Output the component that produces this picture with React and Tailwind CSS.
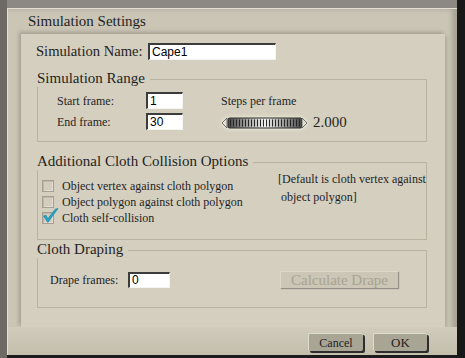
import React from "react";

function Input({ value, w, h = 17 }) {
  return (
    <div
      className="bg-white border-t-2 border-l-2 border-[#3c3c3c] border-b border-r border-b-[#f4f4f0] border-r-[#f4f4f0] flex items-center pl-[2px] font-['Liberation_Sans',sans-serif] text-[12px] text-black leading-none"
      style={{ width: w, height: h }}
    >
      {value}
    </div>
  );
}

function Heading({ children }) {
  return (
    <div className="flex h-[18px] gap-[5px]">
      <span className="text-[15px] leading-[18px] whitespace-nowrap">{children}</span>
      <div className="flex-1 mt-[10px] border-t border-r border-[#b9b49f]" />
    </div>
  );
}

function Check({ checked, label }) {
  return (
    <div className="flex items-center h-[16px] gap-[8px]">
      <div className="relative w-[12px] h-[12px] border border-[#a5a092] bg-[#d2cdbd] shadow-[inset_1px_1px_0_#bdb8a8,inset_-1px_-1px_0_#e2ddd0]">
        {checked && (
          <svg className="absolute -left-[1px] -top-[6px]" width="17" height="17" viewBox="0 0 16 16">
            <path d="M1.5 8.5 L5.5 14.5 L15 1.5 L12.5 2 L5.5 11 L3.8 7.8 Z" fill="#22a8cc" stroke="#0e7c9e" strokeWidth="0.6" />
          </svg>
        )}
      </div>
      <span className="text-[12px] leading-none whitespace-nowrap">{label}</span>
    </div>
  );
}

function Slider() {
  const ticks = Array.from({ length: 24 }, (_, i) => 9.5 + i * 3);
  return (
    <svg width="86" height="14" viewBox="0 0 86 14" className="drop-shadow-[0_0_2px_rgba(255,255,235,0.9)]">
      <defs>
        <linearGradient id="bar" x1="0" x2="1" y1="0" y2="0">
          <stop offset="0" stopColor="#4a4a4a" />
          <stop offset="0.5" stopColor="#f2f2ee" />
          <stop offset="1" stopColor="#4a4a4a" />
        </linearGradient>
      </defs>
      <path d="M6 2 L1 7 L6 12 Z" fill="#e4e0d4" stroke="#555" strokeWidth="0.8" />
      <rect x="7" y="2" width="74" height="10" rx="1.5" fill="url(#bar)" stroke="#2a2a2a" />
      {ticks.map((x) => (
        <line key={x} x1={x} x2={x} y1="3.5" y2="10.5" stroke="#262626" strokeWidth="1" />
      ))}
      <path d="M81 2 L86 7 L81 12 Z" fill="#e4e0d4" stroke="#555" strokeWidth="0.8" />
    </svg>
  );
}

export default function App() {
  return (
    <div className="w-[465px] h-[358px] flex bg-[#75716c] font-['Liberation_Serif',serif] text-[#1f1f1f] overflow-hidden">
      <div className="w-[7px] shrink-0 bg-[#6d6a65]" />
      <div className="w-[450px] shrink-0 flex flex-col">
        <div className="h-[8px] bg-[#8c8883]" />
        <div className="h-[347px] bg-[#cac5b5] flex flex-col border-t border-l border-[#e4dfd2] shadow-[inset_-5px_0_5px_rgba(0,0,0,0.18)]">
          {/* title */}
          <div className="h-[25px] flex items-center pl-[20px] text-[15px]">Simulation Settings</div>

          {/* inner panel */}
          <div className="ml-[13px] w-[424px] h-[293px] bg-[#d4cfbf] shadow-[-2px_-2px_4px_rgba(0,0,0,0.2),2px_2px_3px_rgba(0,0,0,0.12)] pl-[16px] pr-[18px] flex flex-col">
            <div className="mt-[9px] h-[17px] flex items-center">
              <span className="w-[112px] -ml-px text-[14.6px] leading-none">Simulation Name:</span>
              <Input value="Cape1" w={128} />
            </div>

            {/* range */}
            <div className="mt-[9px]">
              <Heading>Simulation Range</Heading>
              <div className="h-[55px] border-l border-r border-b border-[#b9b49f] flex">
                <div className="pl-[19px] pt-[5px] flex flex-col gap-[4px]">
                  <div className="flex items-center h-[17px]">
                    <span className="w-[89px] text-[12px]">Start frame:</span>
                    <Input value="1" w={37} />
                  </div>
                  <div className="flex items-center h-[17px]">
                    <span className="w-[89px] text-[12px]">End frame:</span>
                    <Input value="30" w={37} />
                  </div>
                </div>
                <div className="ml-[38px] flex flex-col">
                  <div className="mt-[7px] h-[14px] text-[12px] leading-[14px]">Steps per frame</div>
                  <div className="mt-[7px] flex items-center gap-[6px]">
                    <Slider />
                    <span className="text-[15px] leading-none">2.000</span>
                  </div>
                </div>
              </div>
            </div>

            {/* collision */}
            <div className="mt-[10px]">
              <Heading>Additional Cloth Collision Options</Heading>
              <div className="h-[70px] border-l border-r border-b border-[#b9b49f] flex">
                <div className="w-[240px] pl-[4px] pt-[8px] flex flex-col">
                  <Check label="Object vertex against cloth polygon" />
                  <Check label="Object polygon against cloth polygon" />
                  <Check checked label="Cloth self-collision" />
                </div>
                <div className="text-[12px] leading-[18px]">
                  <div>[Default is cloth vertex against</div>
                  <div className="pl-[3px]">object polygon]</div>
                </div>
              </div>
            </div>

            {/* draping */}
            <div>
              <Heading>Cloth Draping</Heading>
              <div className="h-[50px] border-l border-r border-b border-[#b9b49f] flex items-start pt-[13px] pl-[12px]">
                <div className="flex items-center h-[17px]">
                  <span className="w-[78px] text-[12px]">Drape frames:</span>
                  <Input value="0" w={42} h={16} />
                </div>
                <div className="ml-[110px] w-[118px] h-[17px] bg-[#cbc6b5] border-t border-l border-[#ddd8ca] shadow-[1px_1px_1px_rgba(0,0,0,0.3)] flex items-center justify-center text-[15px] leading-none text-[#a8a392]">
                  Calculate Drape
                </div>
              </div>
            </div>
          </div>

          {/* buttons */}
          <div className="flex-1 bg-gradient-to-b from-[#d0cbbb] to-[#c3beac] flex justify-end items-start pt-[6px] pr-[30px] gap-[10px]">
            <div className="w-[55px] h-[18px] bg-[#a8a595] border-t border-l border-[#dedbcf] rounded-[2px] shadow-[2px_2px_0_#2e2e2e] flex items-center justify-center text-[12px] leading-none">
              Cancel
            </div>
            <div className="w-[54px] h-[18px] bg-[#a8a595] border-t border-l border-[#dedbcf] rounded-[2px] shadow-[2px_2px_0_#2e2e2e] flex items-center justify-center text-[13px] leading-none">
              OK
            </div>
          </div>
        </div>
        <div className="flex-1 bg-[#1c1c1c]" />
      </div>
      <div className="flex-1 bg-[#181818]" />
    </div>
  );
}
